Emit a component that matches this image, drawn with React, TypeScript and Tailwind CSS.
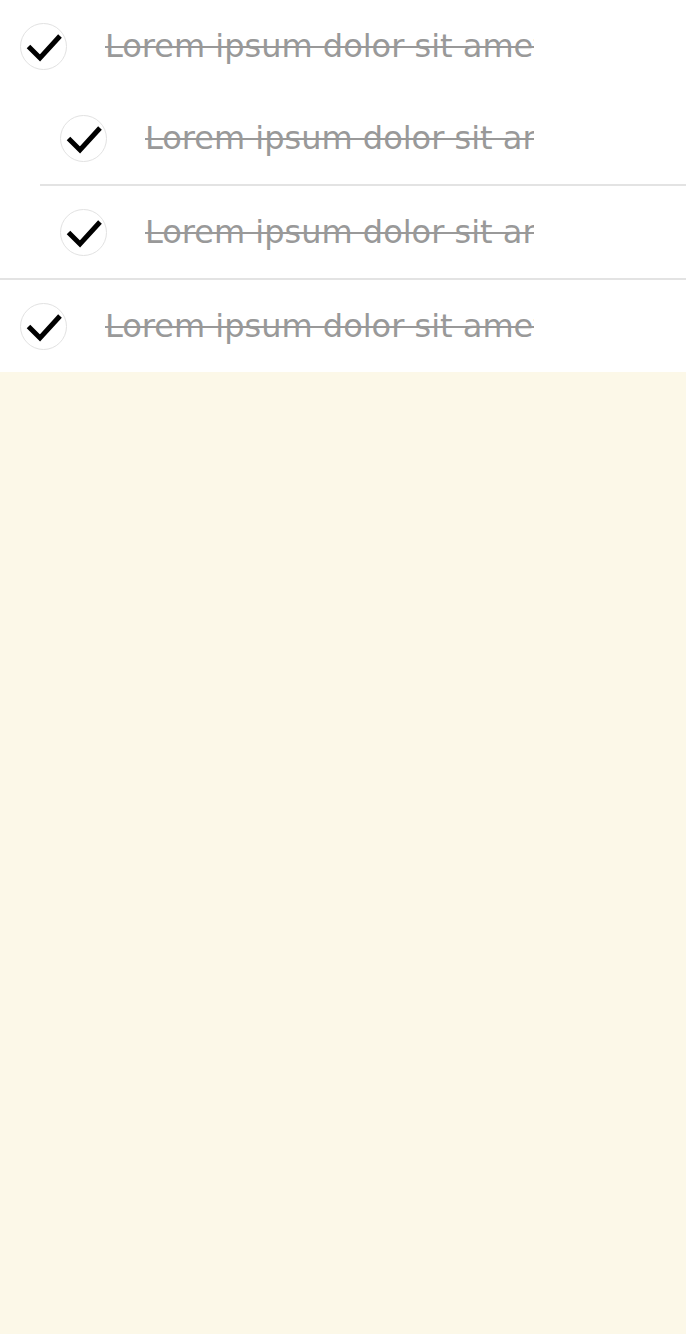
import React from "react";

type Item = { id: number; text: string; done: boolean; children?: Item[] };

const ITEMS: Item[] = [
  {
    id: 1,
    text: "Lorem ipsum dolor sit amet",
    done: true,
    children: [
      { id: 2, text: "Lorem ipsum dolor sit amet", done: true },
      { id: 3, text: "Lorem ipsum dolor sit amet", done: true },
    ],
  },
  { id: 4, text: "Lorem ipsum dolor sit amet", done: true },
];

function CheckCircle({ checked }: { checked: boolean }) {
  return (
    <div className="relative w-[47px] h-[47px] shrink-0 rounded-full border-[1.5px] border-[#e2e2e2] bg-white">
      {checked && (
        <svg
          className="absolute -left-[1.5px] -top-[1.5px]"
          width="47"
          height="47"
          viewBox="0 0 47 47"
        >
          <polyline
            points="8.5,24.5 20,36 40,14"
            fill="none"
            stroke="#000"
            strokeWidth="5"
            strokeLinecap="butt"
            strokeLinejoin="miter"
          />
        </svg>
      )}
    </div>
  );
}

function Row({ item }: { item: Item }) {
  return (
    <div className="flex h-[92px] items-center pl-5 pr-[152px]">
      <CheckCircle checked={item.done} />
      <div className="ml-[38px] min-w-0 flex-1 overflow-hidden whitespace-nowrap">
        <span
          className={
            item.done
              ? "text-[32px] text-[#999999] line-through decoration-[2px]"
              : "text-[32px] text-[#333]"
          }
        >
          {item.text}
        </span>
      </div>
    </div>
  );
}

export default function App() {
  return (
    <div
      className="flex min-h-[1334px] flex-col bg-[#fcf8e8]"
      style={{ fontFamily: '"DejaVu Sans", "Noto Sans", sans-serif' }}
    >
      <div className="bg-white">
        {ITEMS.map((item) => (
          <div key={item.id}>
            <Row item={item} />
            {item.children && (
              <div className="border-b-2 border-[#e3e3e3]">
                {item.children.map((c, i) => (
                  <div
                    key={c.id}
                    className={
                      i < item.children!.length - 1
                        ? "ml-10 border-b-2 border-[#e3e3e3]"
                        : "ml-10"
                    }
                  >
                    <Row item={c} />
                  </div>
                ))}
              </div>
            )}
          </div>
        ))}
      </div>
    </div>
  );
}
